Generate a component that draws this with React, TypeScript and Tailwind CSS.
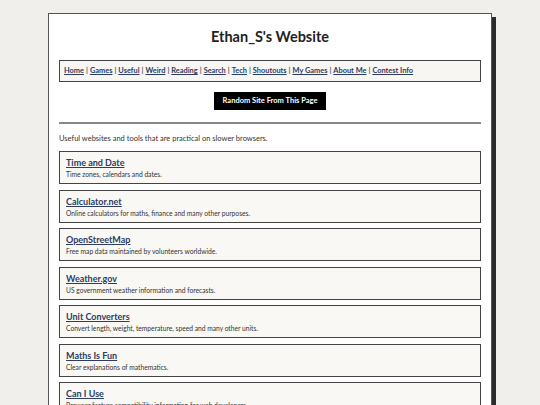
const links = ['Home', 'Games', 'Useful', 'Weird', 'Reading', 'Search', 'Tech', 'Shoutouts', 'My Games', 'About Me', 'Contest Info'];

const sites = [
  { name: 'Time and Date', desc: 'Time zones, calendars and dates.' },
  { name: 'Calculator.net', desc: 'Online calculators for maths, finance and many other purposes.' },
  { name: 'OpenStreetMap', desc: 'Free map data maintained by volunteers worldwide.' },
  { name: 'Weather.gov', desc: 'US government weather information and forecasts.' },
  { name: 'Unit Converters', desc: 'Convert length, weight, temperature, speed and many other units.' },
  { name: 'Maths Is Fun', desc: 'Clear explanations of mathematics.' },
  { name: 'Can I Use', desc: 'Browser feature compatibility information for web developers.' },
];

export default function App() {
  return (
    <div className="min-h-screen bg-[#f0efeb] pt-[13px] text-[#222]" style={{ fontFamily: 'Lato, "Open Sans", sans-serif' }}>
      <div className="mx-auto w-[444px] bg-white border border-[#555] shadow-[4px_4px_0_#2b2b2b] px-[10px] pb-4">
        <h1 className="text-center text-[14.5px] font-bold leading-[20px] pt-[13px] pb-[13px]">Ethan_S's Website</h1>
        <nav className="border border-[#444] bg-[#f7f6f2] h-[22px] flex items-center px-[4px] text-[7.4px] font-bold text-[#555]">
          {links.map((l, i) => (
            <span key={l}>
              {i > 0 && <span className="mx-[2px]">|</span>}
              <a href="#" className="underline text-[#2c3c62]">{l}</a>
            </span>
          ))}
        </nav>
        <div className="flex justify-center mt-[10px]">
          <button className="bg-black text-white text-[7.5px] font-bold h-[18px] w-[112px]">Random Site From This Page</button>
        </div>
        <hr className="mt-[12px] border-0 h-[2px] bg-[#888]" />
        <p className="text-[7.5px] leading-[10px] mt-[10px] mb-[7px] text-[#333]">Useful websites and tools that are practical on slower browsers.</p>
        <div className="flex flex-col gap-[5.5px]">
          {sites.map((s) => (
            <div key={s.name} className="border border-[#444] bg-[#f9f8f4] h-[33px] px-[6px] pt-[5px]">
              <a href="#" className="block text-[9px] font-bold leading-[12px] underline text-[#2c3c62]">{s.name}</a>
              <div className="text-[6.7px] leading-[10px] text-[#333]">{s.desc}</div>
            </div>
          ))}
        </div>
      </div>
    </div>
  );
}
